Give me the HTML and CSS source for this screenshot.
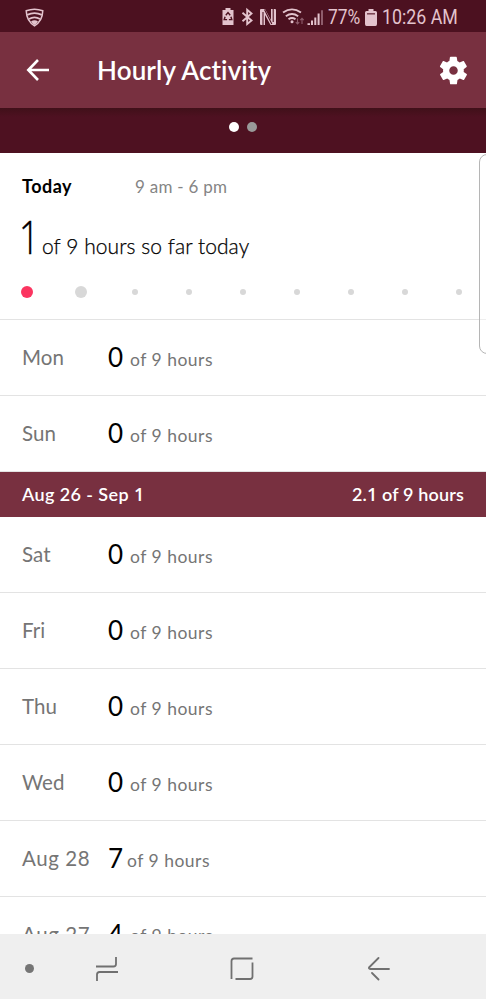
FILE: index.html
```html
<!DOCTYPE html>
<html lang="en">
<head>
<meta charset="utf-8">
<title>Hourly Activity</title>
<link rel="stylesheet" href="styles.css">
</head>
<body>
<div class="screen">
  <div class="status">
    <svg class="shield" width="19" height="19" viewBox="0 0 19 19" fill="none" stroke="#e3c3cd"><path stroke-width="1.5" d="M1.2 2.8Q9.5-.4 17.8 2.8C17.6 9.5 15 14.6 9.5 17.8C4 14.6 1.4 9.5 1.2 2.8Z"/><path stroke-width="1.8" d="M2.2 6.9Q9.5 3.4 16.8 6.9M3.9 11Q9.5 7.7 15.1 11"/><path fill="#e3c3cd" stroke="none" d="M6 13.4Q9.5 11.2 13 13.4Q11.5 15.8 9.5 17Q7.5 15.8 6 13.4Z"/></svg>
    <svg class="tray" width="102" height="20" viewBox="0 0 102 20" fill="#e3c3cd">
      <path d="M.5 3H3.5V1H8.5V3H11.5V18H.5Z"/>
      <path d="M3.800 8.300L6 5.600L8.200 8.300M8.900 9.800L9.800 12.600H6.900M5.100 12.600H2.200L3.100 9.800" fill="none" stroke="#4c1120" stroke-width="1.4"/>
      <path d="M20.5 5.8L29.500 13.5L25.2 17V2.8L29.500 6.500L20.5 14.2" fill="none" stroke="#e3c3cd" stroke-width="1.9"/>
      <path d="M38 2H43L49 13V2H53Q54 2 54 3V17Q54 18 53 18H48.500L43 8V18H39Q38 18 38 17V3Q38 2 39 2Z"/>
      <path d="M41 5V18M51.200 2V15M42.500 2.500L49.800 17" fill="none" stroke="#4c1120" stroke-width="1.100"/>
      <g fill="none" stroke="#e3c3cd" stroke-width="1.9"><path d="M61 5.6Q70-.8 79 5.6M63.8 9.2Q70 4.8 76.2 9.2M66.5 12.2Q70 9.8 73.5 12.2"/></g><circle cx="70" cy="14.8" r="1.5"/>
      <path d="M75.500 11.5V17M73.800 15.2L75.500 17L77.200 15.2M80 17V11.5M78.300 13.2L80 11.3L81.700 13.2" fill="none" stroke="#8e5d6c" stroke-width="1.1"/>
      <path d="M85.500 18V16.300H88V18ZM89 18V13.5H91V18ZM92.3 18V10.5H94.3V18ZM95.6 18V6.5H97.6V18Z"/><path d="M99 18V3.2H101V18Z" fill="#8e5d6c"/>
    </svg>
    <span class="percent">77%</span>
    <svg class="battery" width="12" height="17" viewBox="0 0 12 17" fill="#e3c3cd"><path d="M1.5 2H3.5V0H8.5V2H10.5Q12 2 12 3.5V15Q12 17 10.5 17H1.5Q0 17 0 15V3.5Q0 2 1.5 2Z"/><path d="M2 4.8H10" stroke="#76404e" stroke-width="1.5"/></svg>
    <span class="clock">10:26 AM</span>
  </div>
  <header class="bar">
    <svg class="back" width="24" height="22" viewBox="0 0 24 22" fill="none" stroke="#fff" stroke-width="2.600"><path d="M12 1L2.3 11L12 21M2.5 11H23"/></svg>
    <h1>Hourly Activity</h1>
    <svg class="gear" width="33" height="33" viewBox="0 0 24 24" fill="#fff"><path d="M19.4 13c0-.3.1-.6.1-1s0-.7-.1-1l2.1-1.6c.2-.2.2-.4.1-.6l-2-3.5c-.1-.2-.4-.3-.6-.2l-2.500 1c-.5-.4-1.100-.7-1.700-1L14.400 2.500c0-.3-.2-.5-.5-.5h-4c-.2 0-.4.200-.5.400L9 5.100c-.6.200-1.200.6-1.700 1l-2.500-1c-.2-.1-.5 0-.6.200l-2 3.500c-.1.200-.1.500.1.600L4.500 11c0 .3-.1.700-.1 1s0 .7.1 1l-2.100 1.600c-.2.200-.3.400-.1.600l2 3.500c.1.200.4.300.6.200l2.500-1c.5.400 1.100.7 1.700 1l.4 2.700c0 .2.200.4.500.4h4c.2 0 .5-.2.500-.4l.4-2.700c.6-.3 1.200-.6 1.700-1l2.500 1c.2.100.5 0 .6-.2l2-3.500c.1-.2.100-.5-.1-.6zM12 15.100a3.100 3.100 0 1 1 0-6.200 3.100 3.100 0 0 1 0 6.200z"/></svg>
  </header>
  <div class="pager"><i class="on"></i><i></i></div>
  <main>
    <section class="today">
      <div class="head"><b>Today</b><span class="range">9 am - 6 pm</span></div>
      <div class="count"><span class="big">1</span><span class="sofar">of 9 hours so far today</span></div>
      <div class="dots"><i class="hit"></i><i class="now"></i><i></i><i></i><i></i><i></i><i></i><i></i><i></i></div>
    </section>
    <div class="row"><span class="day">Mon</span><span class="num">0</span><span class="of">of 9 hours</span></div>
    <div class="row"><span class="day">Sun</span><span class="num">0</span><span class="of">of 9 hours</span></div>
    <div class="week"><span class="dates">Aug 26 - Sep <span class="one">1</span></span><span class="avg">2.<span class="one">1</span> of 9 hours</span></div>
    <div class="row"><span class="day">Sat</span><span class="num">0</span><span class="of">of 9 hours</span></div>
    <div class="row"><span class="day">Fri</span><span class="num">0</span><span class="of">of 9 hours</span></div>
    <div class="row"><span class="day">Thu</span><span class="num">0</span><span class="of">of 9 hours</span></div>
    <div class="row"><span class="day">Wed</span><span class="num">0</span><span class="of">of 9 hours</span></div>
    <div class="row"><span class="day aug">Aug 28</span><span class="num narrow">7</span><span class="of">of 9 hours</span></div>
    <div class="row last"><span class="day aug">Aug 27</span><span class="num">4</span><span class="of">of 9 hours</span></div>
    <div class="edge"></div>
  </main>
  <nav>
    <i class="dot"></i>
    <svg class="recents" width="22" height="24" viewBox="0 0 22 24" fill="none" stroke="#707070" stroke-width="1.8"><path d="M0 9.500H17.500Q20 9.500 20 7V0M22 15H3.500Q1 15 1 17.500V24"/></svg>
    <svg class="home" width="24" height="24" viewBox="0 0 24 24" fill="none" stroke="#707070" stroke-width="1.8"><path d="M1.500 22V4Q1.500 1.500 4 1.500H22.500M5.500 22H20Q22.500 22 22.500 19.500V5.500"/></svg>
    <svg class="return" width="22" height="24" viewBox="0 0 22 24" fill="none" stroke="#707070" stroke-width="1.800" stroke-linecap="round" stroke-linejoin="round"><path d="M10.500 1L1 10.500Q.8 12 2 12H21M4 16L10.500 22.500"/></svg>
  </nav>
</div>
</body>
</html>
```
FILE: styles.css
```css
* { box-sizing: border-box; }
body { margin: 0; background: #fff; font-family: Lato, "Open Sans", sans-serif; }
.screen { width: 486px; height: 999px; overflow: hidden; display: flex; flex-direction: column; }
svg { display: block; flex: none; }
i { display: block; border-radius: 50%; flex: none; }
span, b, h1 { white-space: nowrap; }
.status { height: 32px; flex: none; background: #4c1120; display: flex; align-items: center; padding: 2px 0 0 25px; color: #e3c3cd; font: 20px/30px Roboto, sans-serif; }
.tray { margin-left: 178px; }
.percent { width: 32px; margin-left: 4px; transform: scaleX(.87); transform-origin: left; }
.battery { margin-left: 5px; }
.clock { margin-left: 5px; transform: scaleX(.89); transform-origin: left; }
.bar { height: 76px; flex: none; background: #783040; display: flex; align-items: center; padding: 0 16px 0 26px; }
.bar h1 { margin: 0 auto 0 47px; color: #fff; font-size: 26px; line-height: 32px; font-weight: 600; letter-spacing: .12px; }
.pager { height: 45px; flex: none; background: linear-gradient(#401019, #4e1121 20%, #4e1121); display: flex; justify-content: center; gap: 8px; padding-top: 14px; }
.pager i { width: 10px; height: 10px; background: #999; }
.pager .on { background: #fff; }
main { height: 781px; flex: none; overflow: hidden; position: relative; background: #fff; }
.today { height: 167px; border-bottom: 1px solid #e3e3e3; padding: 20px 22px 0; }
.head { display: flex; align-items: baseline; height: 26px; line-height: 26px; }
.head b { width: 113px; font-weight: 700; font-size: 18px; letter-spacing: .5px; }
.range { color: #858585; font-size: 17px; letter-spacing: .25px; }
.count { display: flex; align-items: baseline; height: 60px; line-height: 74px; }
.big { width: 20px; font-family: "Open Sans", sans-serif; font-weight: 300; font-size: 46px; text-indent: -4px; -webkit-text-stroke: .4px #000; transform: scaleX(.8); transform-origin: left; }
.sofar { font-size: 21px; font-weight: 300; color: #000; letter-spacing: .06px; -webkit-text-stroke: .25px #000; }
.dots { display: grid; grid-template-columns: repeat(9, 54px); justify-items: center; align-items: center; height: 12px; margin: 27px 0 0 -22px; }
.dots i { width: 6px; height: 6px; background: #d8d8d8; }
.dots .hit { width: 12px; height: 12px; background: #fb3560; }
.dots .now { width: 12px; height: 12px; }
.row { height: 76px; border-bottom: 1px solid #e3e3e3; padding-left: 22px; display: flex; align-items: flex-start; line-height: 75px; color: #757575; }
.day { width: 86px; font-size: 20.500px; line-height: 75px; letter-spacing: .05px; }
.aug { letter-spacing: .6px; }
.num { width: 22px; font-size: 26px; color: #000; }
.narrow { width: 19px; }
.of { font-size: 17.500px; line-height: 79px; letter-spacing: .5px; }
.last .of { line-height: 77px; }
.week { height: 45px; background: #783040; color: #fff; display: flex; justify-content: space-between; align-items: center; padding: 0 22px; font-size: 18px; font-weight: 600; line-height: 45px; letter-spacing: .4px; }
.avg { letter-spacing: .15px; }
.one { font-family: "Open Sans", sans-serif; }
.edge { position: absolute; left: 479px; top: 1px; width: 20px; height: 200px; border: 1px solid #b5b5b5; border-radius: 8px; background: rgba(255, 255, 255, .4); }
nav { height: 65px; flex: none; background: #efefef; display: flex; align-items: center; padding: 4px 0 0 25px; }
.dot { width: 9px; height: 9px; background: #757575; }
.recents { margin-left: 62px; }
.home { margin-left: 112px; }
.return { margin-left: 114px; }
```
